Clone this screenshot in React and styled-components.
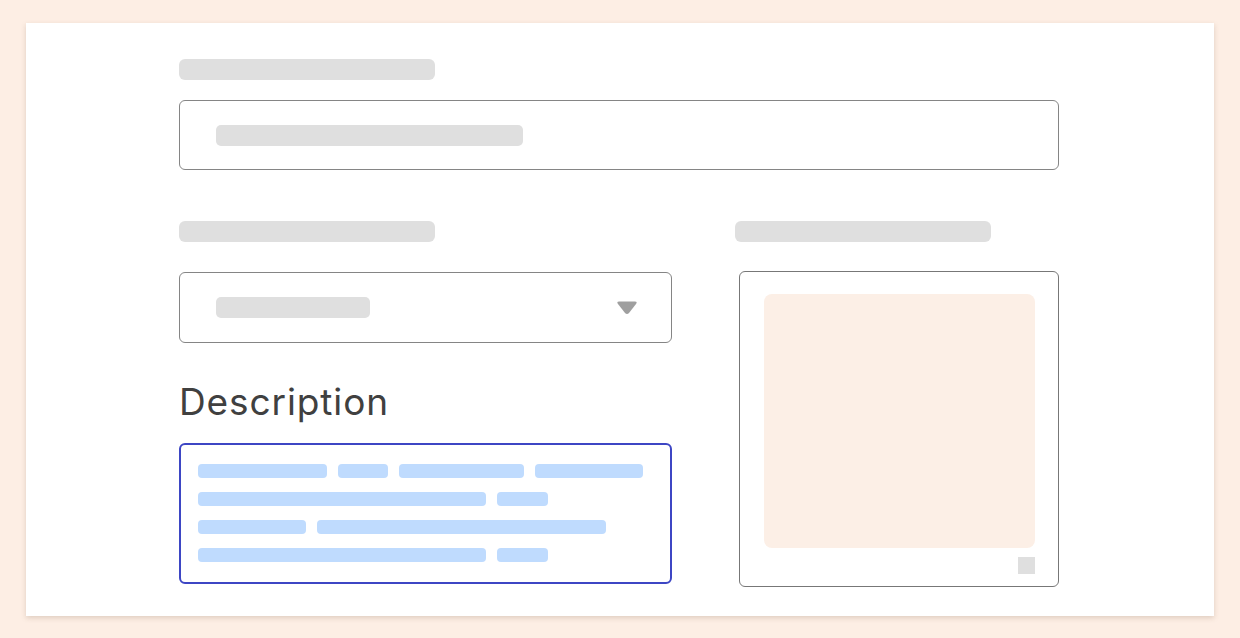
import React from "react";
import styled, { createGlobalStyle } from "styled-components";

const Global = createGlobalStyle`
  html, body { margin: 0; padding: 0; background: #fdeee4; }
  body { font-family: Inter, "Open Sans", sans-serif; }
`;

const Page = styled.div`
  padding: 23px 26px 22px;
  background: #fdeee4;
  min-height: 638px;
  box-sizing: border-box;
`;

const Card = styled.div`
  background: #ffffff;
  height: 593px;
  box-sizing: border-box;
  padding: 36px 0 32px;
  box-shadow: 0 2px 5px rgba(120, 90, 70, 0.22);
`;

const Form = styled.div`
  width: 880px;
  margin: 0 auto;
  position: relative;
  left: -1px;
`;

const LabelBar = styled.div`
  width: 256px;
  height: 21px;
  border-radius: 6px;
  background: #dfdfdf;
`;

const Field = styled.div`
  margin-top: ${(p) => p.$gap}px;
  height: ${(p) => p.$h}px;
  box-sizing: border-box;
  border: 1px solid #858585;
  border-radius: 6px;
  display: flex;
  align-items: center;
  justify-content: space-between;
  padding: 0 33px 0 36px;
  background: #fff;
`;

const PlaceholderBar = styled.div`
  width: ${(p) => p.$w}px;
  height: 21px;
  border-radius: 5px;
  background: #dfdfdf;
`;

const Columns = styled.div`
  display: grid;
  grid-template-columns: 493px 1fr;
  column-gap: 63px;
  margin-top: 51px;
`;

const LeftCol = styled.div`
  display: flex;
  flex-direction: column;
`;

const RightCol = styled.div`
  display: flex;
  flex-direction: column;
`;

const Heading = styled.h2`
  margin: 37px 0 19px;
  font-family: Inter, "Open Sans", sans-serif;
  font-weight: 400;
  font-size: 37px;
  line-height: 44px;
  color: #404040;
  letter-spacing: 0.9px;
`;

const TextArea = styled.div`
  height: 141px;
  box-sizing: border-box;
  border: 2px solid #3d46c4;
  border-radius: 6px;
  padding: 19px 17px;
  display: flex;
  flex-direction: column;
  gap: 14px;
`;

const TextRow = styled.div`
  display: flex;
  gap: 11px;
`;

const TextBar = styled.div`
  width: ${(p) => p.$w}px;
  height: 14px;
  border-radius: 4px;
  background: #bfdbfe;
`;

const ImageBox = styled.div`
  align-self: flex-end;
  width: 320px;
  height: 316px;
  margin-top: 29px;
  box-sizing: border-box;
  border: 1px solid #777;
  border-radius: 6px;
  padding: 22px 23px 12px 24px;
  display: flex;
  flex-direction: column;
  align-items: flex-end;
`;

const ImageArea = styled.div`
  width: 100%;
  height: 254px;
  border-radius: 8px;
  background: #fcefe6;
`;

const Handle = styled.div`
  width: 17px;
  height: 17px;
  margin-top: 9px;
  background: #dfdfdf;
`;

const Caret = () => (
  <svg width="22" height="16" viewBox="0 0 22 16">
    <path
      d="M3 1.5 H19 Q21.5 1.5 20.2 3.8 L13 13 Q11 15.2 9 13 L1.8 3.8 Q0.5 1.5 3 1.5 Z"
      fill="#9f9f9f"
    />
  </svg>
);

const rows = [
  [129, 50, 125, 108],
  [288, 51],
  [108, 289],
  [288, 51],
];

export default function App() {
  return (
    <>
      <Global />
      <Page>
        <Card>
          <Form>
            <LabelBar />
            <Field $gap={20} $h={70}>
              <PlaceholderBar $w={307} />
            </Field>
            <Columns>
              <LeftCol>
                <LabelBar />
                <Field $gap={30} $h={71}>
                  <PlaceholderBar $w={154} />
                  <Caret />
                </Field>
                <Heading>Description</Heading>
                <TextArea>
                  {rows.map((r, i) => (
                    <TextRow key={i}>
                      {r.map((w, j) => (
                        <TextBar key={j} $w={w} />
                      ))}
                    </TextRow>
                  ))}
                </TextArea>
              </LeftCol>
              <RightCol>
                <LabelBar />
                <ImageBox>
                  <ImageArea />
                  <Handle />
                </ImageBox>
              </RightCol>
            </Columns>
          </Form>
        </Card>
      </Page>
    </>
  );
}
